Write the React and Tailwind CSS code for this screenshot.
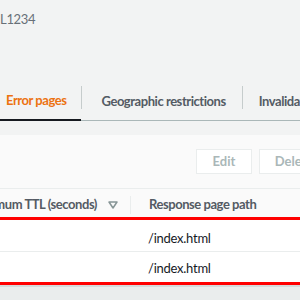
import React from "react";

const FilterIcon = () => (
  <svg width="10" height="8" viewBox="0 0 10 8" className="shrink-0">
    <path d="M1 1 L9 1 L5 7 Z" fill="none" stroke="#879596" strokeWidth="1.5" strokeLinejoin="round" />
  </svg>
);

const Row = ({ path, className }) => (
  <div className={"flex bg-white " + className}>
    <div className="w-[130px] shrink-0" />
    <div className="pl-[18px] text-[13px] tracking-[-0.25px] text-[#16191f]">{path}</div>
  </div>
);

export default function App() {
  return (
    <div className="w-[300px] h-[300px] overflow-hidden bg-[#f2f3f3] font-['Lato',sans-serif] flex flex-col">
      <div className="h-[83px] pt-[10px] text-[13px] leading-[18px] tracking-[-0.3px] text-[#687078]">L1234</div>

      {/* tabs */}
      <div className="flex h-[38px] border-b border-[#aab7b8] tracking-[-0.45px]">
        <div className="flex items-center pl-[6px] pr-[15px] border-b-2 border-[#16191f] -mb-px">
          <span className="text-[13px] font-bold text-[#ec7211] whitespace-nowrap">Error pages</span>
        </div>
        <div className="w-px h-[23px] mt-[3px] bg-[#c6cccc] shrink-0" />
        <div className="flex items-center pl-[19px] pr-[16px]">
          <span className="text-[13px] font-bold text-[#545b64] whitespace-nowrap">Geographic restrictions</span>
        </div>
        <div className="w-px h-[23px] mt-[3px] bg-[#c6cccc] shrink-0" />
        <div className="flex items-center pl-[16px]">
          <span className="text-[13px] font-bold text-[#545b64] whitespace-nowrap">Invalidations</span>
        </div>
      </div>

      <div className="h-[14px]" />

      {/* panel */}
      <div className="bg-[#fafafa] flex flex-col">
        <div className="flex h-[53px] pt-[14px] pl-[196px] gap-[7px]">
          <div className="w-[56px] h-[25px] border border-[#eaeded] bg-white flex items-center justify-center text-[13px] font-bold text-[#aab7b8] shrink-0">
            Edit
          </div>
          <div className="w-[70px] h-[25px] border border-[#eaeded] bg-white flex items-center justify-center text-[13px] font-bold text-[#aab7b8] shrink-0">
            Delete
          </div>
        </div>

        {/* header */}
        <div className="flex h-[29px] border-t border-[#eaeded] items-center pt-[3px] tracking-[-0.45px]">
          <div className="w-[130px] shrink-0 overflow-hidden flex justify-end items-center pr-[12px] gap-[11px]">
            <span className="shrink-0 whitespace-nowrap text-[13px] font-bold text-[#545b64]">Minimum TTL (seconds)</span>
            <FilterIcon />
          </div>
          <div className="w-px h-[18px] bg-[#eaeded]" />
          <div className="pl-[18px] text-[13px] font-bold text-[#545b64] whitespace-nowrap">Response page path</div>
        </div>

        {/* highlighted rows */}
        <div className="border-y-[3px] border-[#ff0000] flex flex-col">
          <Row path="/index.html" className="h-[32px] pt-[9px] border-b border-[#eaeded]" />
          <Row path="/index.html" className="h-[30px] pt-[7px]" />
        </div>
      </div>

      <div className="h-[2px] bg-[#d5dbdb]" />
      <div className="flex-1 bg-[#eaeded]" />
    </div>
  );
}
